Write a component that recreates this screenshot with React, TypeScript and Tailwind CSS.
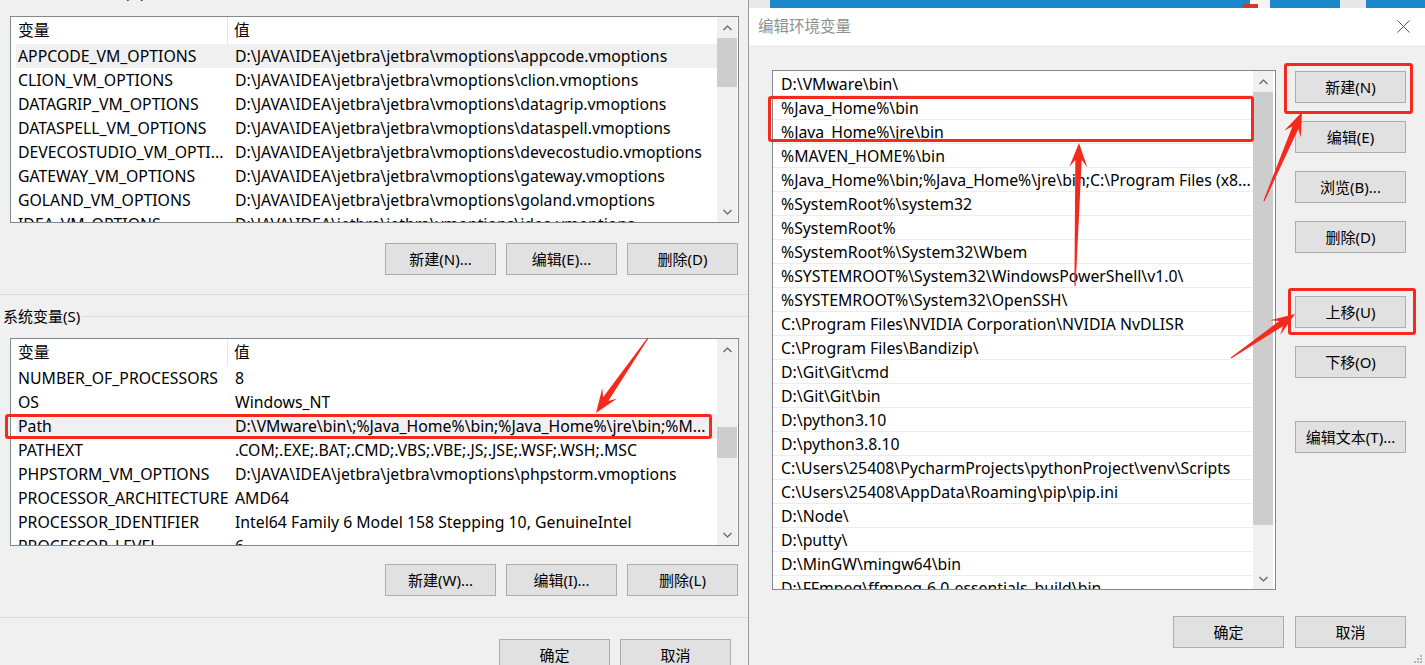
import React from 'react'

const userVars = [
  ['APPCODE_VM_OPTIONS', 'D:\\JAVA\\IDEA\\jetbra\\jetbra\\vmoptions\\appcode.vmoptions'],
  ['CLION_VM_OPTIONS', 'D:\\JAVA\\IDEA\\jetbra\\jetbra\\vmoptions\\clion.vmoptions'],
  ['DATAGRIP_VM_OPTIONS', 'D:\\JAVA\\IDEA\\jetbra\\jetbra\\vmoptions\\datagrip.vmoptions'],
  ['DATASPELL_VM_OPTIONS', 'D:\\JAVA\\IDEA\\jetbra\\jetbra\\vmoptions\\dataspell.vmoptions'],
  ['DEVECOSTUDIO_VM_OPTI...', 'D:\\JAVA\\IDEA\\jetbra\\jetbra\\vmoptions\\devecostudio.vmoptions'],
  ['GATEWAY_VM_OPTIONS', 'D:\\JAVA\\IDEA\\jetbra\\jetbra\\vmoptions\\gateway.vmoptions'],
  ['GOLAND_VM_OPTIONS', 'D:\\JAVA\\IDEA\\jetbra\\jetbra\\vmoptions\\goland.vmoptions'],
  ['IDEA_VM_OPTIONS', 'D:\\JAVA\\IDEA\\jetbra\\jetbra\\vmoptions\\idea.vmoptions'],
]

const systemVars = [
  ['NUMBER_OF_PROCESSORS', '8'],
  ['OS', 'Windows_NT'],
  ['Path', 'D:\\VMware\\bin\\;%Java_Home%\\bin;%Java_Home%\\jre\\bin;%M...'],
  ['PATHEXT', '.COM;.EXE;.BAT;.CMD;.VBS;.VBE;.JS;.JSE;.WSF;.WSH;.MSC'],
  ['PHPSTORM_VM_OPTIONS', 'D:\\JAVA\\IDEA\\jetbra\\jetbra\\vmoptions\\phpstorm.vmoptions'],
  ['PROCESSOR_ARCHITECTURE', 'AMD64'],
  ['PROCESSOR_IDENTIFIER', 'Intel64 Family 6 Model 158 Stepping 10, GenuineIntel'],
  ['PROCESSOR_LEVEL', '6'],
]

const pathEntries = [
  'D:\\VMware\\bin\\',
  '%Java_Home%\\bin',
  '%Java_Home%\\jre\\bin',
  '%MAVEN_HOME%\\bin',
  '%Java_Home%\\bin;%Java_Home%\\jre\\bin;C:\\Program Files (x8...',
  '%SystemRoot%\\system32',
  '%SystemRoot%',
  '%SystemRoot%\\System32\\Wbem',
  '%SYSTEMROOT%\\System32\\WindowsPowerShell\\v1.0\\',
  '%SYSTEMROOT%\\System32\\OpenSSH\\',
  'C:\\Program Files\\NVIDIA Corporation\\NVIDIA NvDLISR',
  'C:\\Program Files\\Bandizip\\',
  'D:\\Git\\Git\\cmd',
  'D:\\Git\\Git\\bin',
  'D:\\python3.10',
  'D:\\python3.8.10',
  'C:\\Users\\25408\\PycharmProjects\\pythonProject\\venv\\Scripts',
  'C:\\Users\\25408\\AppData\\Roaming\\pip\\pip.ini',
  'D:\\Node\\',
  'D:\\putty\\',
  'D:\\MinGW\\mingw64\\bin',
  'D:\\FFmpeg\\ffmpeg-6.0-essentials_build\\bin',
]

const Chevron = ({ up }: { up?: boolean }) => (
  <svg width="9" height="6" viewBox="0 0 9 6">
    <polyline
      points={up ? '0.5,5 4.5,1 8.5,5' : '0.5,1 4.5,5 8.5,1'}
      fill="none"
      stroke="#606060"
      strokeWidth="1.2"
    />
  </svg>
)

// thumb is passed as tailwind classes (margin + height)
const ScrollBar = ({ thumb, className = '' }: { thumb: string; className?: string }) => (
  <div className={`flex w-[20px] shrink-0 flex-col bg-[#f0f0f0] ${className}`}>
    <div className="flex h-[21px] shrink-0 items-center justify-center">
      <Chevron up />
    </div>
    <div className="flex-1">
      <div className={`bg-[#cdcdcd] ${thumb}`} />
    </div>
    <div className="flex h-[21px] shrink-0 items-center justify-center">
      <Chevron />
    </div>
  </div>
)

const Btn = ({ label, className = '' }: { label: string; className?: string }) => (
  <div
    className={`flex h-[32px] w-[111px] shrink-0 items-center justify-center border border-[#adadad] bg-[#e1e1e1] text-[15px] text-black ${className}`}
  >
    {label}
  </div>
)

const VarList = ({
  rows,
  selected,
  thumb,
  height,
}: {
  rows: string[][]
  selected: number
  thumb: string
  height: string
}) => (
  <div className={`ml-[10px] flex w-[729px] shrink-0 overflow-hidden border border-[#828790] bg-white ${height}`}>
    <div className="flex-1 overflow-hidden">
      <div className="flex h-[27px] items-center">
        <div className="flex h-full w-[217px] items-center border-r border-[#e5e5e5] pl-[7px]">变量</div>
        <div className="pl-[6px]">值</div>
      </div>
      {rows.map((r, i) => (
        <div
          key={r[0]}
          className={`ml-[5px] flex h-[24px] items-center whitespace-nowrap pt-px ${i === selected ? 'bg-[#f0f0f0]' : ''}`}
        >
          <div className="w-[212px] shrink-0 overflow-hidden pl-[2px]">{r[0]}</div>
          <div className="overflow-hidden pl-[7px]">{r[1]}</div>
        </div>
      ))}
    </div>
    <ScrollBar thumb={thumb} className="mr-[1px]" />
  </div>
)

const arrow = (tx: number, ty: number, px: number, py: number) => {
  const dx = px - tx
  const dy = py - ty
  const len = Math.hypot(dx, dy)
  const ux = dx / len
  const uy = dy / len
  const nx = -uy
  const ny = ux
  const headLen = 24
  const neck = 17
  const pts = [
    [tx + nx * 0.6, ty + ny * 0.6],
    [px - ux * neck + nx * 3.2, py - uy * neck + ny * 3.2],
    [px - ux * headLen + nx * 9, py - uy * headLen + ny * 9],
    [px, py],
    [px - ux * headLen - nx * 9, py - uy * headLen - ny * 9],
    [px - ux * neck - nx * 3.2, py - uy * neck - ny * 3.2],
    [tx - nx * 0.6, ty - ny * 0.6],
  ]
  return pts.map((p) => `${p[0].toFixed(1)},${p[1].toFixed(1)}`).join(' ')
}

export default function App() {
  return (
    <div className="relative flex h-[665px] w-[1425px] overflow-hidden bg-[#f0f0f0] font-['Noto_Sans','Noto_Sans_CJK_SC',sans-serif] text-[15.8px] text-black">
      {/* background window: environment variables */}
      <div className="flex w-[748px] shrink-0 flex-col">
        <div className="h-[16px] shrink-0 overflow-hidden">
          <div className="-mt-[19px] flex h-[22px] items-center pl-[3px]">
            <span className="whitespace-nowrap text-[15px]">25408 的用户变量(U)</span>
            <div className="ml-[2px] h-px flex-1 bg-[#dcdcdc]" />
          </div>
        </div>

        <VarList rows={userVars} selected={0} thumb="h-[49px]" height="h-[207px]" />

        <div className="mt-[20px] flex shrink-0 justify-end gap-[10px] pr-[10px]">
          <Btn label="新建(N)..." />
          <Btn label="编辑(E)..." />
          <Btn label="删除(D)" />
        </div>

        <div className="mt-[19px] h-px shrink-0 bg-[#dcdcdc]" />

        <div className="mt-[10px] flex h-[22px] shrink-0 items-center pl-[3px]">
          <span className="whitespace-nowrap text-[15px]">系统变量(S)</span>
          <div className="ml-[2px] h-px flex-1 bg-[#dcdcdc]" />
        </div>

        <div className="mt-[11px] shrink-0">
          <VarList rows={systemVars} selected={2} thumb="mt-[67px] h-[31px]" height="h-[208px]" />
        </div>

        <div className="mt-[18px] flex shrink-0 justify-end gap-[10px] pr-[10px]">
          <Btn label="新建(W)..." />
          <Btn label="编辑(I)..." />
          <Btn label="删除(L)" />
        </div>

        <div className="mt-[21px] h-px shrink-0 bg-[#dcdcdc]" />

        <div className="mt-[21px] flex shrink-0 justify-end gap-[10px] pr-[17px]">
          <Btn label="确定" />
          <Btn label="取消" />
        </div>
      </div>

      {/* edit dialog */}
      <div className="relative flex flex-1 flex-col border-l border-[#9a9a9a]">
        <div className="flex h-[8px] shrink-0">
          <div className="w-[21px] bg-[#e9e9e9]" />
          <div className="relative flex-1 bg-[#1c87c9]">
            <div className="absolute left-[480px] top-0 h-[8px] w-[20px] bg-[#f4f4f4]" />
            <div className="absolute left-[473px] top-[4px] h-[4px] w-[15px] bg-[#d13a2a]" />
            <div className="absolute left-[570px] top-0 h-[8px] w-[26px] bg-[#e8e8e8]" />
          </div>
        </div>

        <div className="flex h-[37px] shrink-0 items-center justify-between bg-white pl-[9px] pr-[15px]">
          <span className="text-[15.5px] text-[#909090]">编辑环境变量</span>
          <svg width="13" height="13" viewBox="0 0 13 13">
            <path d="M0.5 0.5 L12.5 12.5 M12.5 0.5 L0.5 12.5" stroke="#555" strokeWidth="1" />
          </svg>
        </div>

        <div className="flex flex-1 flex-col">
          <div className="flex shrink-0 pl-[23px] pt-[25px]">
            <div className="flex h-[520px] w-[504px] shrink-0 border border-[#828790] bg-white">
              <div className="flex-1 overflow-hidden pt-px">
                {pathEntries.map((p) => (
                  <div
                    key={p}
                    className="flex h-[24px] items-center whitespace-nowrap border-b border-[#ececec] pl-[8px] pt-[2px]"
                  >
                    {p}
                  </div>
                ))}
              </div>
              <ScrollBar thumb="h-[433px]" className="mr-[2px]" />
            </div>

            <div className="ml-[19px] flex flex-col pt-px">
              <Btn label="新建(N)" />
              <Btn label="编辑(E)" className="mt-[18px]" />
              <Btn label="浏览(B)..." className="mt-[18px]" />
              <Btn label="删除(D)" className="mt-[18px]" />
              <Btn label="上移(U)" className="mt-[43px]" />
              <Btn label="下移(O)" className="mt-[18px]" />
              <Btn label="编辑文本(T)..." className="mt-[43px]" />
            </div>
          </div>

          <div className="mt-[26px] flex shrink-0 justify-end gap-[11px] pr-[19px]">
            <Btn label="确定" />
            <Btn label="取消" />
          </div>
        </div>

        {/* size grip */}
        <div className="absolute bottom-[2px] right-[3px] grid grid-cols-3 gap-[1px]">
          <div className="h-[2px] w-[2px]" />
          <div className="h-[2px] w-[2px]" />
          <div className="h-[2px] w-[2px] bg-[#b5b5b5]" />
          <div className="h-[2px] w-[2px]" />
          <div className="h-[2px] w-[2px] bg-[#b5b5b5]" />
          <div className="h-[2px] w-[2px] bg-[#b5b5b5]" />
          <div className="h-[2px] w-[2px] bg-[#b5b5b5]" />
          <div className="h-[2px] w-[2px] bg-[#b5b5b5]" />
          <div className="h-[2px] w-[2px] bg-[#b5b5b5]" />
        </div>
      </div>

      {/* red annotations drawn over the screenshot */}
      <div className="pointer-events-none absolute left-[5px] top-[414px] h-[25px] w-[707px] rounded-[3px] border-[3px] border-[#f42a1e]" />
      <div className="pointer-events-none absolute left-[768px] top-[96px] h-[46px] w-[486px] rounded-[3px] border-[3px] border-[#f42a1e]" />
      <div className="pointer-events-none absolute left-[1284px] top-[63px] h-[51px] w-[129px] rounded-[3px] border-[3px] border-[#f42a1e]" />
      <div className="pointer-events-none absolute left-[1288px] top-[288px] h-[47px] w-[128px] rounded-[3px] border-[3px] border-[#f42a1e]" />

      <svg className="pointer-events-none absolute left-0 top-0" width="1425" height="665">
        <polygon points={arrow(648, 338, 596, 413)} fill="#f42a1e" />
        <polygon points={arrow(1075, 286, 1079, 143)} fill="#f42a1e" />
        <polygon points={arrow(1264, 201, 1302, 112)} fill="#f42a1e" />
        <polygon points={arrow(1231, 358, 1295, 314)} fill="#f42a1e" />
      </svg>
    </div>
  )
}
